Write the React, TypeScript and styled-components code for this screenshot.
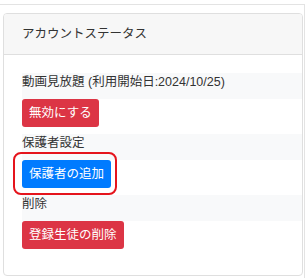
import React from 'react'
import styled, { createGlobalStyle } from 'styled-components'

const GlobalStyle = createGlobalStyle`
  html, body {
    margin: 0;
    padding: 0;
    background: #fff;
  }
  body {
    font-family: 'Liberation Sans', 'Noto Sans CJK JP', sans-serif;
    color: #212529;
  }
`

type Section = {
  label: string
  action: string
  variant: 'danger' | 'primary'
  highlight?: boolean
}

const sections: Section[] = [
  { label: '動画見放題 (利用開始日:2024/10/25)', action: '無効にする', variant: 'danger' },
  { label: '保護者設定', action: '保護者の追加', variant: 'primary', highlight: true },
  { label: '削除', action: '登録生徒の削除', variant: 'danger' },
]

const App = () => {
  return (
    <>
      <GlobalStyle />
      <Frame>
        <Card>
          <CardHeader>アカウントステータス</CardHeader>
          <CardBody>
            {sections.map((s) => (
              <Group key={s.label}>
                <Label>{s.label}</Label>
                <ButtonWrap $highlight={s.highlight}>
                  <Button $variant={s.variant}>{s.action}</Button>
                </ButtonWrap>
              </Group>
            ))}
          </CardBody>
        </Card>
      </Frame>
    </>
  )
}

export default App

const Frame = styled.div`
  box-sizing: border-box;
  margin-top: 4px;
  width: 305px;
  height: 274px;
  border-top: 1px solid #e3e3e3;
  border-right: 1px solid #e3e3e3;
  padding: 8px 1px 0 3px;
`

const Card = styled.div`
  box-sizing: border-box;
  height: 263px;
  border: 1px solid #dfdfdf;
  border-radius: 4px;
  overflow: hidden;
`

const CardHeader = styled.div`
  background: #f7f7f7;
  border-bottom: 1px solid #dfdfdf;
  padding: 11px 18px;
  font-size: 12.5px;
  line-height: 18px;
  color: #333;
`

const CardBody = styled.div`
  padding: 18px 0 18px 18px;
`

const Group = styled.div`
  display: flex;
  flex-direction: column;
  align-items: flex-start;
  margin-bottom: 7px;
`

const Label = styled.div`
  align-self: stretch;
  background: #f8f9fa;
  font-size: 12.5px;
  line-height: 18px;
  padding-bottom: 8px;
  color: #333;
`

const ButtonWrap = styled.div<{ $highlight?: boolean }>`
  position: relative;
  display: flex;

  &::after {
    content: '';
    display: ${({ $highlight }) => ($highlight ? 'block' : 'none')};
    position: absolute;
    left: -9px;
    top: -8px;
    right: -6px;
    bottom: -7px;
    border: 2px solid #e5141c;
    border-radius: 8px;
    pointer-events: none;
  }
`

const Button = styled.button<{ $variant: 'danger' | 'primary' }>`
  font-family: inherit;
  font-size: 12.5px;
  line-height: 18px;
  padding: 5px 7px;
  border: none;
  border-radius: 3px;
  color: #fff;
  background: ${({ $variant }) => ($variant === 'danger' ? '#dc3545' : '#007bff')};
  cursor: pointer;
`
